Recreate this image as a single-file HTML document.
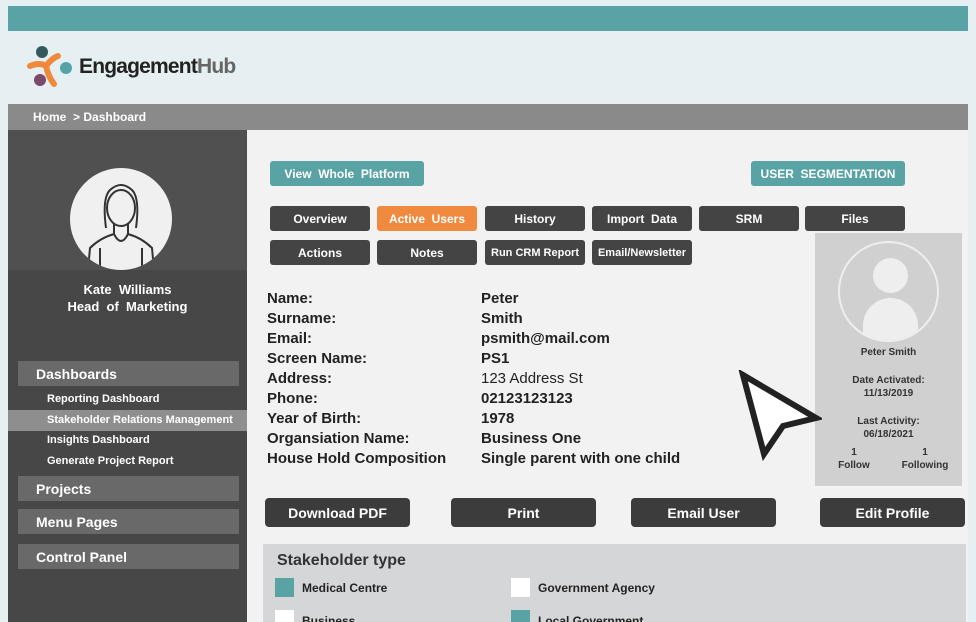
<!DOCTYPE html>
<html><head><meta charset="utf-8"><style>
*{margin:0;padding:0;box-sizing:border-box}
html,body{width:976px;height:622px;overflow:hidden}
body{background:#e6eff1;font-family:"Liberation Sans",sans-serif;position:relative}
.a{position:absolute}
.btn{position:absolute;color:#fff;font-size:12px;text-align:center;border-radius:3px;display:flex;align-items:center;justify-content:center;font-weight:bold}
.tab{background:#444;height:25px;top:206px;width:100px}
.teal{background:#5aa3a5;height:25px;top:161px;font-size:12px}
.side{position:absolute;left:18px;width:221px;background:#696969;color:#fff;font-size:14px;padding-left:18px;display:flex;align-items:center;font-weight:bold}
.sub{position:absolute;left:47px;color:#fff;font-size:11px;font-weight:bold}
.lab,.val{position:absolute;font-size:15px;color:#222;line-height:20px;font-weight:bold}
.abtn{top:498px;height:29px;width:145px;background:#3c3c3c;font-size:14px;border-radius:4px}
.cb{position:absolute;width:19px;height:19px;background:#fff}
.cbt{position:absolute;font-size:12px;font-weight:bold;color:#222}
</style></head><body>
<div class="a" style="left:8px;top:6px;width:960px;height:25px;background:#5aa3a5"></div>
<svg class="a" style="left:26px;top:44px" width="48" height="46" viewBox="0 0 48 46">
<path d="M4 22 Q14 18 20 22 Q26 14 32 12 M20 22 Q22 32 28 40" stroke="#f08a3a" stroke-width="6" fill="none" stroke-linecap="round"/>
<circle cx="16" cy="8" r="6" fill="#355a5e"/><circle cx="40" cy="24" r="6" fill="#55a3a8"/><circle cx="14" cy="36" r="6" fill="#7a4a6a"/>
</svg>
<div class="a" style="left:79px;top:55px;font-size:21px;font-weight:bold;color:#222;letter-spacing:-0.8px">Engagement<span style="color:#666">Hub</span></div>
<div class="a" style="left:8px;top:104px;width:960px;height:26px;background:#8a8a8a"></div>
<div class="a" style="left:33px;top:110px;color:#fff;font-size:12px;font-weight:bold">Home &nbsp;&gt; Dashboard</div>
<div class="a" style="left:8px;top:130px;width:239px;height:492px;background:#474747"></div>
<div class="a" style="left:8px;top:130px;width:239px;height:140px;background:#505050"></div>
<div class="a" style="left:247px;top:130px;width:721px;height:492px;background:#f2f2f2"></div>
<div class="a" style="left:70px;top:168px;width:102px;height:102px;border-radius:50%;background:#f0f0f0;overflow:hidden">
<svg width="102" height="102" viewBox="0 0 102 102"><g fill="none" stroke="#333" stroke-width="2"><path d="M36 60 Q32 30 40 22 Q51 12 62 22 Q70 30 66 60"/><ellipse cx="51" cy="40" rx="14" ry="18"/><path d="M44 56 L44 66 Q30 70 20 80 L18 102 M58 56 L58 66 Q72 70 82 80 L84 102 M44 66 Q51 80 58 66 M30 80 L30 102 M72 80 L72 102"/></g></svg></div>
<div class="a" style="left:8px;top:281px;width:239px;text-align:center;color:#fff;font-size:13px;line-height:17px;font-weight:bold">Kate &nbsp;Williams<br>Head &nbsp;of &nbsp;Marketing</div>
<div class="side" style="top:361px;height:25px">Dashboards</div>
<div class="sub" style="top:393px">Reporting Dashboard</div>
<div class="a" style="left:8px;top:410px;width:239px;height:21px;background:#8e8e8e"></div>
<div class="sub" style="top:414px">Stakeholder Relations Management</div>
<div class="sub" style="top:434px">Insights Dashboard</div>
<div class="sub" style="top:455px">Generate Project Report</div>
<div class="side" style="top:476px;height:25px">Projects</div>
<div class="side" style="top:509px;height:25px">Menu Pages</div>
<div class="side" style="top:544px;height:25px">Control Panel</div>
<div class="btn teal" style="left:270px;width:154px">View &nbsp;Whole &nbsp;Platform</div>
<div class="btn teal" style="left:751px;width:154px">USER &nbsp;SEGMENTATION</div>
<div class="btn tab" style="left:270px">Overview</div>
<div class="btn tab" style="left:377px;background:#f08a3e">Active &nbsp;Users</div>
<div class="btn tab" style="left:485px">History</div>
<div class="btn tab" style="left:592px">Import &nbsp;Data</div>
<div class="btn tab" style="left:699px">SRM</div>
<div class="btn tab" style="left:805px">Files</div>
<div class="btn tab" style="left:270px;top:240px">Actions</div>
<div class="btn tab" style="left:377px;top:240px">Notes</div>
<div class="btn tab" style="left:485px;top:240px;font-size:11px">Run CRM Report</div>
<div class="btn tab" style="left:592px;top:240px;font-size:11px">Email/Newsletter</div>
<div class="a" style="left:815px;top:233px;width:147px;height:253px;background:#d0d0d0"></div>
<div class="a" style="left:838px;top:241px;width:101px;height:101px;border-radius:50%;border:2px solid #eee;overflow:hidden">
<div class="a" style="left:33px;top:15px;width:35px;height:35px;border-radius:50%;background:#eee"></div>
<div class="a" style="left:23px;top:55px;width:55px;height:60px;border-radius:28px 28px 0 0;background:#eee"></div></div>
<div class="a" style="left:815px;top:347px;width:147px;text-align:center;font-size:10px;color:#333;font-weight:bold">Peter Smith</div>
<div class="a" style="left:815px;top:374px;width:147px;text-align:center;font-size:10px;color:#333;line-height:13px;font-weight:bold">Date Activated:<br>11/13/2019</div>
<div class="a" style="left:815px;top:415px;width:147px;text-align:center;font-size:10px;color:#333;line-height:13px;font-weight:bold">Last Activity:<br>06/18/2021</div>
<div class="a" style="left:834px;top:446px;width:40px;text-align:center;font-size:10px;color:#333;line-height:13px;font-weight:bold">1<br>Follow</div>
<div class="a" style="left:898px;top:446px;width:54px;text-align:center;font-size:10px;color:#333;line-height:13px;font-weight:bold">1<br>Following</div>
<svg class="a" style="left:738px;top:370px" width="84" height="92" viewBox="0 0 84 92"><path d="M5 5 L78 48 L45 56 L26 84 Z" fill="#fff" stroke="#222" stroke-width="6" stroke-linejoin="miter"/></svg>
<div class="lab" style="left:267px;top:289px">Name:<br>Surname:<br>Email:<br>Screen Name:<br>Address:<br>Phone:<br>Year of Birth:<br>Organsiation Name:<br>House Hold Composition</div>
<div class="val" style="left:481px;top:289px">Peter<br>Smith<br>psmith@mail.com<br>PS1<br><span style="font-weight:normal">123 Address St</span><br>02123123123<br>1978<br>Business One<br>Single parent with one child</div>
<div class="btn abtn" style="left:265px">Download PDF</div>
<div class="btn abtn" style="left:451px">Print</div>
<div class="btn abtn" style="left:631px">Email User</div>
<div class="btn abtn" style="left:820px">Edit Profile</div>
<div class="a" style="left:263px;top:544px;width:703px;height:78px;background:#d5d6d8"></div>
<div class="a" style="left:277px;top:552px;font-size:16px;color:#333;font-weight:bold">Stakeholder type</div>
<div class="cb" style="left:275px;top:578px;background:#5aa3a5"></div>
<div class="cbt" style="left:302px;top:581px">Medical Centre</div>
<div class="cb" style="left:511px;top:578px"></div>
<div class="cbt" style="left:538px;top:581px">Government Agency</div>
<div class="cb" style="left:275px;top:610px"></div>
<div class="cbt" style="left:302px;top:614px">Business</div>
<div class="cb" style="left:511px;top:610px;background:#5aa3a5"></div>
<div class="cbt" style="left:538px;top:614px">Local Government</div>
</body></html>
